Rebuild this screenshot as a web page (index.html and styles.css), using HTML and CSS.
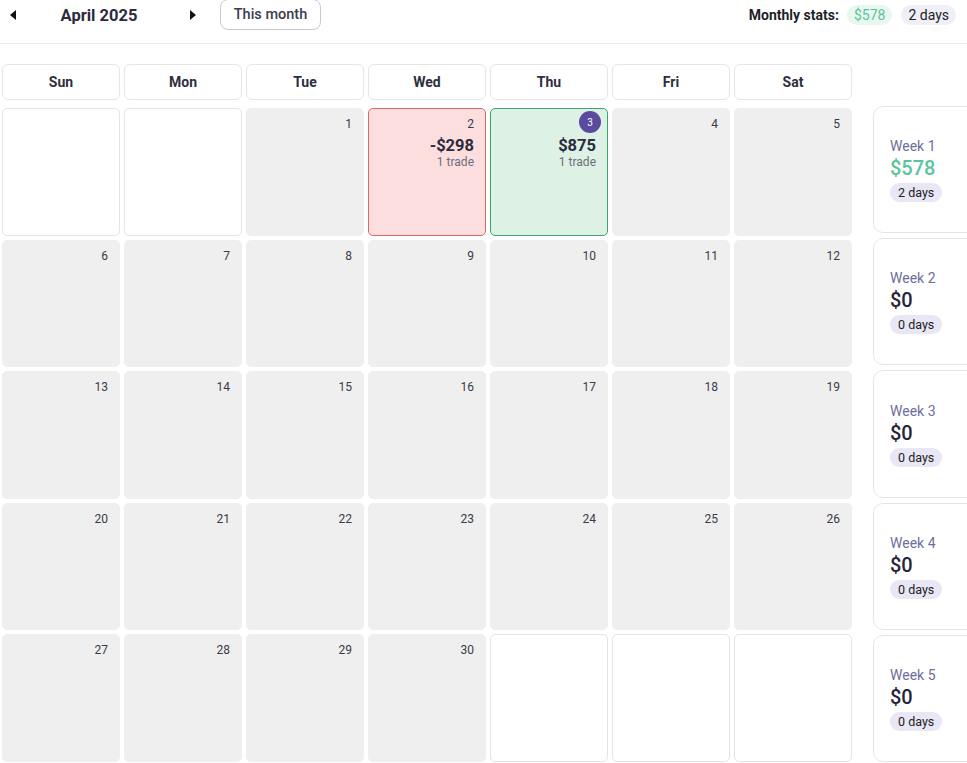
FILE: index.html
```html
<!DOCTYPE html>
<html>
<head>
<meta charset="utf-8">
<link rel="stylesheet" href="styles.css">
</head>
<body>
<div class="topbar">
  <div class="nav">
    <button class="arrow" aria-label="Previous"><svg width="6" height="10" viewBox="0 0 6 10"><path d="M6 0L0 5L6 10Z" fill="#111"/></svg></button>
    <div class="month">April 2025</div>
    <button class="arrow" aria-label="Next"><svg width="6" height="10" viewBox="0 0 6 10"><path d="M0 0L6 5L0 10Z" fill="#111"/></svg></button>
    <button class="this-month">This month</button>
  </div>
  <div class="stats">
    <span class="stats-label">Monthly stats:</span>
    <span class="pill pill-green">$578</span>
    <span class="pill pill-gray">2 days</span>
  </div>
</div>
<div class="main">
  <div class="calendar">
    <div class="weekdays">
      <div class="wd">Sun</div><div class="wd">Mon</div><div class="wd">Tue</div><div class="wd">Wed</div><div class="wd">Thu</div><div class="wd">Fri</div><div class="wd">Sat</div>
    </div>
    <div class="grid">
      <div class="cell empty"></div>
      <div class="cell empty"></div>
      <div class="cell"><span class="num">1</span></div>
      <div class="cell loss"><span class="num">2</span><span class="pnl">-$298</span><span class="trades">1 trade</span></div>
      <div class="cell win"><span class="badge">3</span><span class="pnl">$875</span><span class="trades">1 trade</span></div>
      <div class="cell"><span class="num">4</span></div>
      <div class="cell"><span class="num">5</span></div>

      <div class="cell"><span class="num">6</span></div>
      <div class="cell"><span class="num">7</span></div>
      <div class="cell"><span class="num">8</span></div>
      <div class="cell"><span class="num">9</span></div>
      <div class="cell"><span class="num">10</span></div>
      <div class="cell"><span class="num">11</span></div>
      <div class="cell"><span class="num">12</span></div>

      <div class="cell"><span class="num">13</span></div>
      <div class="cell"><span class="num">14</span></div>
      <div class="cell"><span class="num">15</span></div>
      <div class="cell"><span class="num">16</span></div>
      <div class="cell"><span class="num">17</span></div>
      <div class="cell"><span class="num">18</span></div>
      <div class="cell"><span class="num">19</span></div>

      <div class="cell"><span class="num">20</span></div>
      <div class="cell"><span class="num">21</span></div>
      <div class="cell"><span class="num">22</span></div>
      <div class="cell"><span class="num">23</span></div>
      <div class="cell"><span class="num">24</span></div>
      <div class="cell"><span class="num">25</span></div>
      <div class="cell"><span class="num">26</span></div>

      <div class="cell"><span class="num">27</span></div>
      <div class="cell"><span class="num">28</span></div>
      <div class="cell"><span class="num">29</span></div>
      <div class="cell"><span class="num">30</span></div>
      <div class="cell empty"></div>
      <div class="cell empty"></div>
      <div class="cell empty"></div>
    </div>
  </div>
  <div class="weeks">
    <div class="week"><div class="wk-label">Week 1</div><div class="wk-val green">$578</div><span class="wk-days">2 days</span></div>
    <div class="week"><div class="wk-label">Week 2</div><div class="wk-val">$0</div><span class="wk-days">0 days</span></div>
    <div class="week"><div class="wk-label">Week 3</div><div class="wk-val">$0</div><span class="wk-days">0 days</span></div>
    <div class="week"><div class="wk-label">Week 4</div><div class="wk-val">$0</div><span class="wk-days">0 days</span></div>
    <div class="week"><div class="wk-label">Week 5</div><div class="wk-val">$0</div><span class="wk-days">0 days</span></div>
  </div>
</div>
</body>
</html>
```
FILE: styles.css
```css
* { box-sizing: border-box; }
html, body { margin: 0; padding: 0; }
body {
  font-family: Roboto, "Liberation Sans", sans-serif;
  color: #2b2b3d;
  background: #fff;
  width: 967px;
  height: 763px;
  overflow: hidden;
}
.topbar {
  height: 44px;
  border-bottom: 1px solid #ececec;
  display: flex;
  justify-content: space-between;
  align-items: flex-start;
}
.nav {
  display: flex;
  align-items: center;
  height: 30px;
}
.arrow {
  border: 0;
  background: none;
  padding: 0;
  width: 26px;
  height: 30px;
  display: flex;
  align-items: center;
  justify-content: center;
  cursor: pointer;
}
.month {
  width: 146px;
  margin-right: 8px;
  text-align: center;
  font-size: 16.5px;
  font-weight: 700;
  color: #2b2b3d;
}
.this-month {
  margin-left: 14px;
  height: 31px;
  margin-top: -1px;
  width: 101px;
  border: 1px solid #c9c9d3;
  border-radius: 8px;
  background: #fff;
  font-family: Roboto, "Liberation Sans", sans-serif;
  font-size: 14.5px;
  font-weight: 500;
  color: #3b3b4d;
  padding: 0;
}
.stats {
  display: flex;
  align-items: center;
  height: 30px;
  padding-right: 11px;
}
.stats-label {
  font-size: 14px;
  font-weight: 700;
  color: #1f1f2b;
  margin-right: 8px;
}
.pill {
  font-size: 14px;
  line-height: 20px;
  border-radius: 10px;
  padding: 0 7px;
}
.pill-green { background: #e8f7ef; color: #5cc49c; }
.pill-gray { background: #f0eff7; color: #222; margin-left: 9px; }

.main {
  display: flex;
  padding-top: 20px;
}
.calendar {
  padding-left: 2px;
  width: 852px;
  flex: none;
}
.weekdays {
  display: grid;
  grid-template-columns: repeat(7, 118px);
  gap: 4px;
  height: 36px;
}
.wd {
  border: 1px solid #e6e6e6;
  border-radius: 6px;
  display: flex;
  align-items: center;
  justify-content: center;
  font-size: 14px;
  font-weight: 700;
  color: #2e2e40;
}
.grid {
  margin-top: 8px;
  display: grid;
  grid-template-columns: repeat(7, 118px);
  grid-template-rows: repeat(5, 1fr);
  gap: 4px;
  height: 654px;
}
.cell {
  background: #efefef;
  border: 1px solid #efefef;
  border-radius: 5px;
  display: flex;
  flex-direction: column;
  align-items: flex-end;
  padding: 7px 11px 0 0;
  position: relative;
}
.cell.empty {
  background: #fff;
  border-color: #e4e4e4;
}
.num {
  font-size: 12px;
  line-height: 16px;
  color: #3a3a4a;
}
.cell.loss {
  background: #fcdedf;
  border-color: #da6a6a;
}
.cell.win {
  background: #ddf1e4;
  border-color: #3aa56e;
  padding-top: 27px;
}
.pnl {
  font-size: 16.5px;
  font-weight: 700;
  line-height: 20px;
  color: #2b2b3d;
  margin-top: 4px;
}
.cell.win .pnl { margin-top: 0; }
.trades {
  font-size: 12px;
  line-height: 13px;
  color: #6e6e78;
}
.badge {
  position: absolute;
  top: 2px;
  right: 6px;
  width: 22px;
  height: 22px;
  border-radius: 50%;
  background: #5b4b9f;
  color: #fff;
  font-size: 10px;
  display: flex;
  align-items: center;
  justify-content: center;
}
.weeks {
  margin-left: 21px;
  margin-top: 42px;
  display: flex;
  flex-direction: column;
  gap: 5px;
  height: 656px;
  flex: none;
  width: 120px;
}
.week {
  flex: 1;
  border: 1px solid #e6e6e6;
  border-radius: 10px;
  display: flex;
  flex-direction: column;
  justify-content: center;
  align-items: flex-start;
  padding-left: 16px;
}
.wk-label {
  font-size: 14px;
  color: #6e6e9a;
  line-height: 18px;
}
.wk-val {
  font-size: 20px;
  font-weight: 500;
  line-height: 26px;
  color: #26263a;
}
.wk-val.green { color: #5cc49c; }
.wk-days {
  font-size: 12.5px;
  line-height: 19px;
  background: #e9e6f5;
  border-radius: 10px;
  padding: 0 8px;
  color: #222;
  margin-top: 2px;
}
```
